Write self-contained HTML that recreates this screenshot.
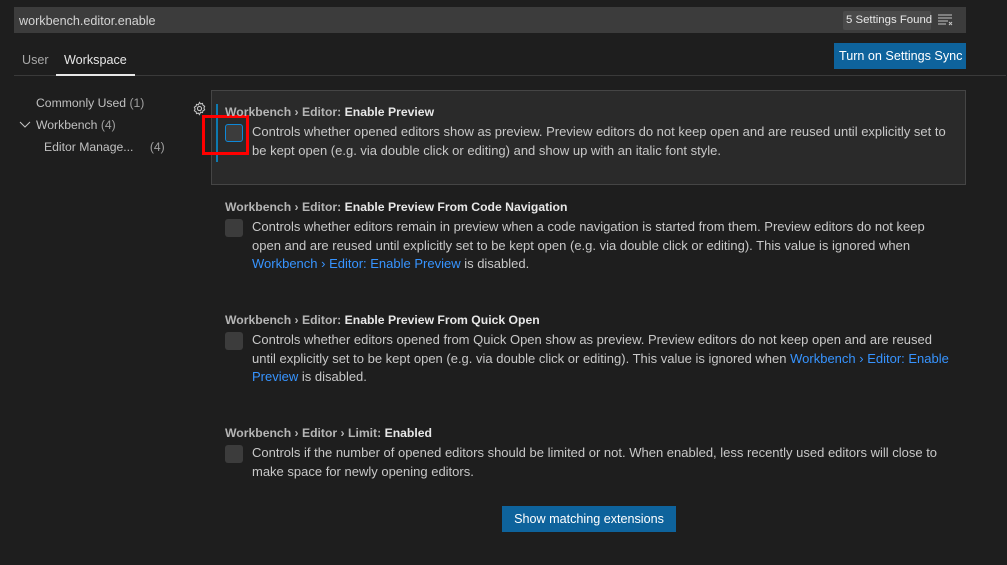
<!DOCTYPE html>
<html><head><meta charset="utf-8"><style>
*{margin:0;padding:0;box-sizing:border-box}
body{width:1007px;height:565px;background:#1e1e1e;font-family:"Liberation Sans",sans-serif;font-size:12.2px;color:#ccc;position:relative;overflow:hidden}
.a{position:absolute;white-space:nowrap}
.search{left:14px;top:7px;width:952px;height:26px;background:#3c3c3c}
.cb{position:absolute;width:18px;height:18px;background:#3c3c3c;border-radius:3px}
.t{color:#b5b5b5;font-weight:bold}
.t b{color:#e7e7e7}
.d{line-height:18.6px;color:#c8c8c8;font-size:13px}
.l{color:#3794ff}
</style></head><body>
<div class="a search"></div>
<div class="a" style="left:19px;top:14px;color:#d4d4d4;font-size:12.6px">workbench.editor.enable</div>
<div class="a" style="left:843px;top:11px;height:19px;width:88px;background:#4a4a4a;border-radius:2px"></div>
<div class="a" style="left:846px;top:14px;color:#e8e8e8;font-size:11.4px">5 Settings Found</div>
<svg class="a" style="left:937px;top:13px" width="18" height="14"><path d="M1 2h14M1 5h14M1 8h10M1 11h8" stroke="#c5c5c5" stroke-width="1"/><path d="M12 9l3 3M15 9l-3 3" stroke="#c5c5c5"/></svg>
<div class="a" style="left:22px;top:53px;color:#a8a8a8;font-size:12.6px">User</div>
<div class="a" style="left:64px;top:53px;color:#e7e7e7;font-size:12.6px">Workspace</div>
<div class="a" style="left:14px;top:75px;width:992px;height:1px;background:#3a3a3a"></div>
<div class="a" style="left:56px;top:74px;width:79px;height:2px;background:#e7e7e7"></div>
<div class="a" style="left:834px;top:43px;width:132px;height:26px;background:#0e639c"></div>
<div class="a" style="left:839px;top:49px;color:#fff;font-size:12.6px">Turn on Settings Sync</div>
<div class="a" style="left:36px;top:96px;color:#c0c0c0">Commonly Used <span style="color:#a0a0a0">(1)</span></div>
<svg class="a" style="left:19px;top:121px" width="12" height="8"><path d="M1 1l5 5 5-5" stroke="#c5c5c5" fill="none"/></svg>
<div class="a" style="left:36px;top:118px;color:#c0c0c0">Workbench <span style="color:#a0a0a0">(4)</span></div>
<div class="a" style="left:44px;top:140px;color:#c0c0c0">Editor Manage... <span style="color:#a0a0a0;margin-left:13px">(4)</span></div>
<div class="a" style="left:211px;top:90px;width:755px;height:95px;background:#2a2a2a;border:1px solid #454545"></div>
<div class="a" style="left:216px;top:104px;width:2px;height:58px;background:#0e7ab0"></div>
<svg class="a" style="left:192px;top:101px" width="15" height="15" viewBox="0 0 16 16"><circle cx="8" cy="8" r="2.2" fill="none" stroke="#c5c5c5" stroke-width="1.2"/><path d="M8 1.5l1.2 1.6 2-.5.5 2 1.8 1-.8 1.9.8 1.9-1.8 1-.5 2-2-.5L8 14.5l-1.2-1.6-2 .5-.5-2-1.8-1 .8-1.9-.8-1.9 1.8-1 .5-2 2 .5z" fill="none" stroke="#c5c5c5" stroke-width="1.1"/></svg>
<div class="a" style="left:202px;top:115px;width:47px;height:40px;border:3px solid #ff0000"></div>
<div class="a t" style="left:225px;top:105px">Workbench › Editor: <b>Enable Preview</b></div>
<div class="cb" style="left:225px;top:124px;border:1px solid #0e88d8"></div>
<div class="a d" style="left:252px;top:123px">Controls whether opened editors show as preview. Preview editors do not keep open and are reused until explicitly set to<br>be kept open (e.g. via double click or editing) and show up with an italic font style.</div>
<div class="a t" style="left:225px;top:200px">Workbench › Editor: <b>Enable Preview From Code Navigation</b></div>
<div class="cb" style="left:225px;top:219px"></div>
<div class="a d" style="left:252px;top:218px">Controls whether editors remain in preview when a code navigation is started from them. Preview editors do not keep<br>open and are reused until explicitly set to be kept open (e.g. via double click or editing). This value is ignored when<br><span class="l">Workbench › Editor: Enable Preview</span> is disabled.</div>
<div class="a t" style="left:225px;top:313px">Workbench › Editor: <b>Enable Preview From Quick Open</b></div>
<div class="cb" style="left:225px;top:332px"></div>
<div class="a d" style="left:252px;top:331px">Controls whether editors opened from Quick Open show as preview. Preview editors do not keep open and are reused<br>until explicitly set to be kept open (e.g. via double click or editing). This value is ignored when <span class="l">Workbench › Editor: Enable</span><br><span class="l">Preview</span> is disabled.</div>
<div class="a t" style="left:225px;top:426px">Workbench › Editor › Limit: <b>Enabled</b></div>
<div class="cb" style="left:225px;top:445px"></div>
<div class="a d" style="left:252px;top:444px">Controls if the number of opened editors should be limited or not. When enabled, less recently used editors will close to<br>make space for newly opening editors.</div>
<div class="a" style="left:502px;top:506px;width:174px;height:26px;background:#0e639c"></div>
<div class="a" style="left:502px;top:512px;width:174px;text-align:center;color:#fff;font-size:12.6px">Show matching extensions</div>
</body></html>
